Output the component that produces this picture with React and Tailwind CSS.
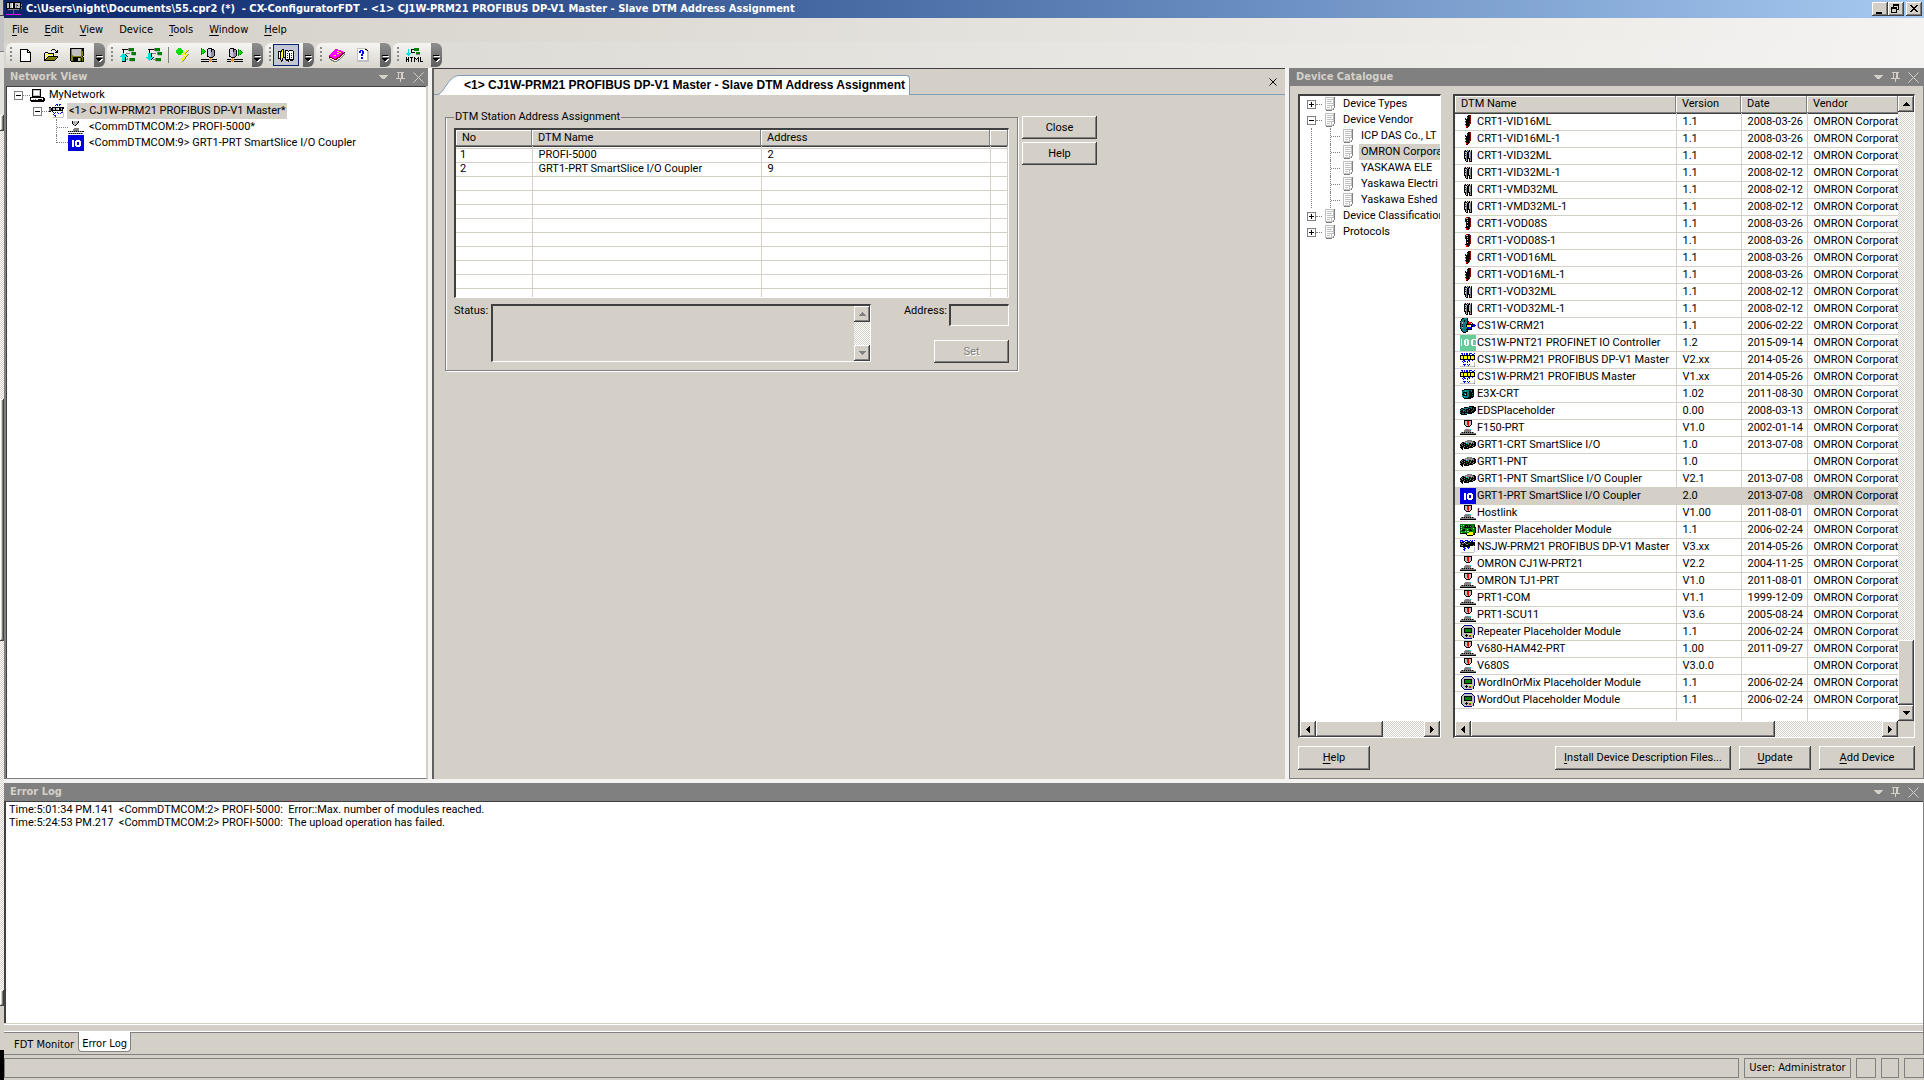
import React from "react";
import clsx from "clsx";

const COLORS = {
  k: "#000000", w: "#ffffff", g: "#808080", s: "#c0c0c0", d: "#404040",
  y: "#ffff00", o: "#808000", t: "#008080", c: "#00e0e0", b: "#0000ff",
  n: "#000080", r: "#ff0000", m: "#800000", e: "#008000", l: "#00e000",
  p: "#ff00ff", v: "#9090a8", u: "#c8c8e0", a: "#e09030",
};

const ART = {
  app: [
    "kkkkkkkkkkkkkkk.", "kssksswkksssssk.", "kssksswkksgssskg", "kssksswkksgksskg", "kssksswkksgsssk.",
    "kssksswkksgssskg", "kkkkkkkkkkkkkkkg", "..gggggpggggg...", ".......p........", ".......p........",
    ".......p........", ".......p........", "ppppppppppppppp.", "................",
  ],
  blank: [
    "kkkkkkkk...", "kwwwwwwkk..", "kwwwwwwkwk.", "kwwwwwwkkkk", "kwwwwwwwwwk", "kwwwwwwwwwk", "kwwwwwwwwwk",
    "kwwwwwwwwwk", "kwwwwwwwwwk", "kwwwwwwwwwk", "kwwwwwwwwwk", "kwwwwwwwwwk", "kkkkkkkkkkk",
  ],
  open: [
    ".........kkk....", "........k...k.k.", ".............kk.", "..kkk.......kkk.", ".kywykkkkkk.....", ".kwywywywyk.....",
    ".kywywywywk.....", ".kwywkkkkkkkkkk.", ".kywkoooooooook.", ".kwkoooooooook..", ".kkoooooooook...", ".kkkkkkkkkkk....",
  ],
  save: [
    "kkkkkkkkkkkkkk", "kosssssssssokk", "kosssssssssokk", "kosssssssssook", "kosssssssssook", "kosssssssssook",
    "kosssssssssook", "koossssssssook", "koooooooooook", "kookkkkkkkkook", "kookkkkkssokok", "kookkkkkssokok", "kookkkkkssokok", ".kkkkkkkkkkkkk",
  ],
  up: [
    "........geeeee..", "..kkkkkkgeeeee..", "...k....geeeee..", "...k.....sssss..", "...k.......geeee", "...c..gggg.geeee",
    "..ccck.....geeee", ".ccccck.....ssss", "ccccccck........", "..ccck..........", "..ccck.g.geeeee.", "..ccckgg.geeeee.",
    "..ccck...geeeee.", "..kkkk....sssss.",
  ],
  down: [
    "........geeeee..", "..kkkkkkgeeeee..", "...k....geeeee..", "...k.....sssss..", "...k.......geeee", "..ccckgggg.geeee",
    "..ccck.....geeee", "..ccck......ssss", "..ccck..........", "ccccccck........", ".ccccck..geeeee.", "..ccck.gggeeeee.",
    "...c.....geeeee.", "..........sssss.",
  ],
  bolt: [
    "..lll.........", ".lllll........", "lllllll...yyg.", "lllllll..yyg..", "lllllll.yyg...", ".lllll.yyg....", "..lll.yyyyyyg.",
    ".........yyg..", "........yyg...", ".......yyg....", "......yyyg....", "......yyg.....", ".....yyg......", ".....yg.......",
  ],
  netIn: [
    "e......kkkk.....", "ele...kuuukkk...", "elle..kuuukvvk..", "ellle.kuuukvvk..", "elle..kuuuvvvk..", "ele...kuuuvvvk..",
    "e.....kuuuvvvk..", "......kuuuvvvk..", "......kkuuvvk...", "........kkkk....", ".........a......", "kkkkkkkkaaakkkkk",
    "........aaa.....", "kkkkkkkk.a.kkkkk",
  ],
  netOut: [
    "...kkkk.........", "..kuuukkk..e....", "..kuuukvvk.ele..", "..kuuukvvk.elle.", "..kuuuvvvk.ellle", "..kuuuvvvk.elle.",
    "..kuuuvvvk.ele..", "..kuuuvvvk.e....", "..kkuuvvk.......", "....kkkk........", ".....a..........", "kkkkaaakkkkkkkkk",
    "....aaa.........", "kkkk.a.kkkkkkkkk",
  ],
  catalogue: [
    "....kk..........", "...kyk.kkk.kkkk.", "kkkkyk.kwwkwwwwk", "kwkyyk.kwwwwwwwk", "kwkyyk.kwbwkwbwk", "kwkyyk.kwwwkwwwk",
    "kwkyyk.kwbwkwbwk", "kwkyyk.kwwwkwwwk", "kwkyykkkwbwkwbwk", "kkkyk..kwwwkwwwk", "..kyk..kkkkkkkkk", "...kk...kkkwkkk.", "...k......k.....",
  ],
  book: [
    "......ppp.......", ".....ppppppp....", "....ppppyypppp..", "...pppppppyypppm", "..ppppppyypppmmg", ".pppppppppppmmwg",
    "pppppyyppppmmwg.", "mpppppppppmmwg..", "mmmpppppmmmwg...", "gwwmmppmmwwg....", ".ggwwmmmwgg.....", "..gggwwwgg......",
    "....gggg........",
  ],
  question: [
    "sssssssss...", "swwwwwwwkk..", "swwbbbwwwsk.", "swbbwbbwwwss", "swbbwbbwwwss", "swwwwbbwwwss", "swwwbbwwwwss",
    "swwwbbwwwwss", "swwwwwwwwwss", "swwwbbwwwwss", "swwwbbwwwwss", "swwwwwwwwwss", "ssssssssssss", "ssssssssssss",
  ],
  html: [
    "........eeeee.", "..c..kkkeeeee.", "..c..k..eeeee.", "..c..k........", "..c..kkkk.eeee", "ccccc.....eeee",
    ".ccc......gggg", "..c...........", "..............", "k.k.kkk.k...k.k..", "k.k..k..kk.kk.k..", "kkk..k..k.k.k.k..", "k.k..k..k...k.k..", "k.k..k..k...k.kkk",
  ],
  pc: [
    "..kkkkkkkkk....", "..ksssssssk....", "..kswwwwwsk....", "..kswwwwwsk....", "..kswwwwwsk....", "..kswwwwwsk....",
    "..ksssssssk....", "..kkkkkkkkk....", "kkkkkkkkkkkkkk.", "kwwwwwwwwwwwwkk", "kwwcwrwwkkkkwkk", "kkkkkkkkkkkkkkk", ".kkkkkkkkkkkkk.",
  ],
  master: [
    ".......bb.bb...", "......b.b.b....", "...............", "kk.kkkkkkkkkkkk", "ggkkssksswkkskk", "ggkkssksswkksk.",
    "ggkkkkkkkkkkkk.", "kk.kwwwwwwwwwg.", "...wbwbwbwwwbb.", "...wwbwwwbwbwws", "...wbwwwwwwwwws", "...wwbbwwwwwwws",
    "...wwwbwwwwwwws", "....ssssssssss.",
  ],
  connGray: [
    "....ksssssk.....", "....ksgssgk.....", "....kssssk......", ".....kssk.......", "......gk........", "................",
    "................", "......ggggg.....", ".....gggggg.....", ".....gggggg.....", "kgkgkgkgkgkgkgkk", "................", "gkgkgkgkgkgkgkg.",
  ],
  conn: [
    "....kkkkkkkk....", "....kssrrssk....", "....kssrrssk....", "....kssrrssk....", "....kssrrssk....", ".....kssrsk.....",
    "......kkkk......", "................", "................", ".....ggggcc.....", "....ggggggg.....", "....ggggggg.....",
    ".gkgkgkgkgkgkg..", "gggggggggggggggg", "kkkkkkkkkkkkkkkk",
  ],
  doc: [
    "sssssssssg", "swwwwwwwsg", "swsssssssg", "swwwwwwwsg", "swssssswsg", "swwwwwwwsg", "swsssssssg", "swwwwwwwsg",
    "swsssssssg", "swwwwwswwg", "swssswswwg", "swwwwwswg.", "ssssssssg.", ".gggggg...",
  ],
  moduleRed: [
    "...kkm", "..kkmm", "..rkkm", "b.kkkm", "bkkkkm", ".kkkkm", "bkkkkm", "gkkkkm", ".kkkmm", "bkkkm.", "skkkm.", ".rkk..", ".mk...",
  ],
  moduleYellow: [
    ".rkkm.", "rsskmm", "bkkkkm", "bkykkm", "bkkkkm", ".kykkm", ".kkkkm", ".kkkkm", ".kykkm", ".kkkkm", "bkkkm.", ".rkkm.", ".rmm..",
  ],
  moduleGray: [
    "sk.msk.m", "kbkskksk", "ksskksgk", "kbskksgk", "ksgkksgk", "kbgkksgk", "ksgkksgk", "ksgkksgk", "kkgkkkgk", ".kgk.kgk", ".ksk.ksk", "..kk.mkk",
  ],
  crm: [
    "..kktttk........", ".ktttttk........", ".kttkttk........", "ktttkttkk.......", "ttsttttkrrrk....", "ktsttttkrrrwk...",
    "ktktttkkkkkkkbb.", "ktttttkyyywbbbbb", "ktktttkyyywkkbb.", "ttsttttkbbbk....", "kttttttkbbbk....", ".kttttkkkkkk....", ".ktttttk........",
    "..ktttkk........", "...kkk..........",
  ],
  prm: [
    ".bbwbwbbwbbbwwb.", "wwbwbwbbwbwwbbw.", "kkkkkkkkkkkkkkk.", "kyykyyykyykyyyk.", "kyykyyykyykyyyk.", "kyykyyykyykyyyk.",
    "kkkkkkkkkkkkkkk.", "wwwbbwwwbbwwbww.", "wwbwbbwbwbwwwww.", "wwwbwwwbwwwwwws.", "wwwwwwwwwwwwwws.", "wwwbbbwbwbwwwws.",
    "wwwwbwwwbwwwwws.", "ssssssssssssssg.",
  ],
  nsj: [
    "bbbwwbbbwwbwbwb.", "bwbbbwwbbbwbbww.", "kkkkwkkkkkkkkkk.", "gkggkgkkeekkkkk.", "gkkkkkggkkkkkkk.", "kggkkkkkkkkkkgk.",
    "kkkkkkkkkkwwwww.", "wwwbbwwbbbwwwws.", "wwwwbbwwbwwwwws.", "wwwbbwwwwwwwwws.", "wwwwbwwwwwwwwws.", "wwwwwwwwwwwwwws.", ".sssssssssssss..",
  ],
  e3x: [
    "..kkkkkkkkkk", "kktttttkttkk", "tttctttkktkk", "tkkkkttkkkkk", "tkttkttkkktk", "kktykttkkkkk", "tkkkkttkkktk", "ttcttttkkkkk", ".kttttkkkkk.", "..kkkkkkk...",
  ],
  eds: [
    ".........kkkkk..", "....kkkkttttkkkk", ".kktttttkkktktkk", "kttkktkkktkkktkk", "tkkttkktkkkktkkk", "kkktktktkkktkkk.", "tkkkkkkkkkkkkk..", "kkttktttkkkk....", ".kkkkkk.........",
  ],
  grt: [
    ".......ggggg....", ".....ggggcgggkk.", "..kkggsggggsggkk", ".kgkkkcggkkgkgkk", "kgkkgkkkgkekkkkk", "kkgkkkekkkgkkgkk", "gkkkgkkkkekkgkk.", "kkkgkkkgkkkkk...", ".kk.kkkkk.......", "..k.............",
  ],
  board: [
    "eeeeeeeeeeeeeee.", "esesekkkekkeeek.", "keeeekgkekgkeek.", "eseekkkkkkkeeekk", "keeeeeeeeeeeesek", "esekkeesekkeeeek", "eekkkeeeekkkeeek",
    "eeeeesesseeeeeek", "eseeeeeeeyyyyeek", "kkkkkkkyyyyyyek.", "......kyyyyyykk.", ".......kkkkkk...",
  ],
  pda: [
    "...nnnnnnnn...", "..nssssssssn..", ".nssssssssssn.", "nsskkkkkkkkssn", "nsskeeeeeekssn", "nsskeeeeeekssn", "nsskeeeeeekssn",
    "nsskkkkkkkkssn", "nssssssssssssn", "nsssskssyysssn", "nssskkkseessn.", ".nssskssrrssn.", "..nsssssssssn.", "...nnnnnnnn...",
  ],
};

function Pix({ name }) {
  const rows = ART[name];
  const w = Math.max(...rows.map((r) => r.length));
  const rects = [];
  rows.forEach((row, y) => {
    let x = 0;
    while (x < row.length) {
      let n = 1;
      while (row[x + n] === row[x]) n++;
      if (row[x] !== ".") rects.push(<rect key={x + "-" + y} x={x} y={y} width={n} height="1" fill={COLORS[row[x]]} />);
      x += n;
    }
  });
  return (
    <svg width={w} height={rows.length} viewBox={`0 0 ${w} ${rows.length}`} shapeRendering="crispEdges" className="shrink-0" aria-hidden="true">
      {rects}
    </svg>
  );
}

function IoIcon() {
  return (
    <svg width="16" height="16" viewBox="0 0 16 16" shapeRendering="crispEdges" className="shrink-0" aria-hidden="true">
      <rect width="16" height="16" fill="#0000e0" />
      <path d="M4 5h2v7h-2zM8 5h4v1h1v5h-1v1h-4v-1h-1v-5h1zM9 7v3h2v-3z" fill="#fff" fillRule="evenodd" />
    </svg>
  );
}
function IocIcon() {
  return (
    <svg width="16" height="16" viewBox="0 0 16 16" shapeRendering="crispEdges" className="shrink-0" aria-hidden="true">
      <rect width="16" height="16" fill="#66cc99" />
      <path d="M1 4h1v7h-1zM4 5h1v-1h3v1h1v5h-1v1h-3v-1h-1zM6 5v5h1v-5zM11 5h1v-1h4v1h-3v5h3v1h-4v-1h-1z" fill="#fff" fillRule="evenodd" />
    </svg>
  );
}
function DeviceIcon({ name }) {
  if (name === "io") return <IoIcon />;
  if (name === "ioc") return <IocIcon />;
  return <Pix name={name} />;
}

const RAISED = "bg-[#d4d0c8] shadow-[inset_-1px_-1px_0_#404040,inset_1px_1px_0_#ffffff,inset_-2px_-2px_0_#808080]";
const SUNKEN = "border-t-2 border-l-2 border-r border-b border-t-[#404040] border-l-[#404040] border-r-white border-b-white";
const DITHER = "bg-[conic-gradient(#fff_25%,#d4d0c8_0_50%,#fff_0_75%,#d4d0c8_0)] bg-[length:2px_2px]";

function Arrow({ dir, color = "#000" }) {
  const d = { up: "M3 0h1v1h1v1h1v1h1v1H0V3h1V2h1V1h1z", down: "M0 0h7v1H6v1H5v1H4v1H3V3H2V2H1V1H0z", left: "M3 0h1v7H3V6H2V5H1V4H0V3h1V2h1V1h1z", right: "M0 0h1v1h1v1h1v1h1v1H3v1H2v1H1v1H0z" }[dir];
  const v = dir === "up" || dir === "down";
  return (
    <svg width={v ? 7 : 4} height={v ? 4 : 7} shapeRendering="crispEdges" aria-hidden="true">
      <path d={d} fill={color} />
    </svg>
  );
}
function ScrollButton({ dir, disabled }) {
  return (
    <button type="button" disabled={disabled} aria-label={"Scroll " + dir} className={clsx("flex size-4 shrink-0 items-center justify-center", RAISED)}>
      <Arrow dir={dir} color={disabled ? "#808080" : "#000"} />
    </button>
  );
}
function Button({ children, className, disabled }) {
  return (
    <button type="button" disabled={disabled} className={clsx("px-2 text-center", RAISED, disabled && "text-[#808080] [text-shadow:1px_1px_0_#fff]", className)}>
      {children}
    </button>
  );
}
const Key = ({ children }) => <span className="underline underline-offset-2">{children}</span>;

function PanelHeader({ title }) {
  return (
    <header className="flex h-[18px] shrink-0 items-center bg-[#808080] pr-1 pl-1.5 text-[#d4d0c8]">
      <h2 className="flex-1 font-['DejaVu_Sans_Condensed',sans-serif] font-bold">{title}</h2>
      <div className="flex items-center gap-2">
        <button type="button" aria-label="Panel menu">
          <svg width="9" height="10" shapeRendering="crispEdges"><path d="M0 3h9v1h-1v1h-1v1h-1v1h-3v-1h-1v-1h-1v-1h-1z" fill="#d4d0c8" /></svg>
        </button>
        <button type="button" aria-label="Pin panel">
          <svg width="9" height="10" shapeRendering="crispEdges"><path d="M1 0h7v1h-1v5h2v1h-4v3h-1v-3h-4v-1h2v-5h-1zM3 1v5h2v-5z" fill="#d4d0c8" fillRule="evenodd" /></svg>
        </button>
        <button type="button" aria-label="Close panel">
          <svg width="11" height="11"><path d="M0.5 0.5l10 10M10.5 0.5l-10 10" stroke="#d4d0c8" /></svg>
        </button>
      </div>
    </header>
  );
}

function TitleBar() {
  return (
    <header className="flex h-[18px] items-center gap-1 bg-linear-to-r from-[#0a246a] to-[#a6caf0] pr-0.5 pl-0.5 text-white">
      <Pix name="app" />
      <h1 className="flex-1 truncate font-['DejaVu_Sans_Condensed',sans-serif] text-[11px] font-bold whitespace-pre">
        {"C:\\Users\\night\\Documents\\55.cpr2 (*)  - CX-ConfiguratorFDT - <1> CJ1W-PRM21 PROFIBUS DP-V1 Master - Slave DTM Address Assignment"}
      </h1>
      <div className="flex">
        <button type="button" aria-label="Minimize" className={clsx("h-3.5 w-4", RAISED)}>
          <svg width="16" height="14" shapeRendering="crispEdges"><path d="M4 10h6v2H4z" /></svg>
        </button>
        <button type="button" aria-label="Restore" className={clsx("h-3.5 w-4", RAISED)}>
          <svg width="16" height="14" shapeRendering="crispEdges"><path d="M5 2h6v6h-2v3h-6v-6h2zM6 4v1h3v2h1v-3zM4 7v3h4v-3z" fillRule="evenodd" /></svg>
        </button>
        <button type="button" aria-label="Close" className={clsx("ml-0.5 h-3.5 w-4", RAISED)}>
          <svg width="16" height="14" shapeRendering="crispEdges"><path d="M4 3h2v1h1v1h2V4h1V3h2v1h-1v1h-1v1H9v1h1v1h1v1h1v1h-2V9H9V8H7v1H6v1H4V9h1V8h1V7h1V6H6V5H5V4H4z" /></svg>
        </button>
      </div>
    </header>
  );
}

const MENUS = [["F", "ile"], ["E", "dit"], ["V", "iew"], ["", "Device"], ["T", "ools"], ["W", "indow"], ["H", "elp"]];

function MenuBar() {
  return (
    <nav className="flex h-6 items-center bg-linear-to-r from-[#d4d0c8] to-[#f4f3f1] font-['DejaVu_Sans_Condensed',sans-serif]">
      {MENUS.map(([k, rest]) => (
        <button type="button" key={rest} className="px-2 leading-4">
          {k && <Key>{k}</Key>}
          {rest}
        </button>
      ))}
    </nav>
  );
}

function ToolGroup({ children, className = "pl-0.5" }) {
  return (
    <div className="mr-0.5 flex h-6 items-stretch overflow-hidden rounded-md bg-linear-to-b from-[#f6f5f3] to-[#d9d6cf]">
      <div className="mt-1 mb-1 ml-1 w-0.5 bg-[repeating-linear-gradient(#8c8a85_0_2px,transparent_2px_4px)]" />
      <div className={clsx("flex items-center pr-1", className)}>{children}</div>
      <button type="button" aria-label="Toolbar options" className="flex w-[11px] flex-col items-center justify-end bg-linear-to-b from-[#8f8f8f] to-[#5e5e5e] pb-1">
        <svg width="7" height="8" shapeRendering="crispEdges"><path d="M1 1h6v1H1zM1 4h6v1H6v1H5v1H3V6H2V5H1z" fill="#fff" /><path d="M0 0h6v1H0zM0 3h6v1H5v1H4v1H2V5H1V4H0z" /></svg>
      </button>
    </div>
  );
}
function Tool({ icon, label, active }) {
  return (
    <button type="button" aria-label={label} title={label} className={clsx("flex h-[22px] w-[26px] items-center justify-center", active && "border border-[#0a246a] bg-[#c2c6d6]")}>
      <Pix name={icon} />
    </button>
  );
}

function ToolBar() {
  return (
    <div className="flex h-[26px] items-center bg-linear-to-r from-[#d8d5ce] to-[#f4f3f1] pl-0.5" role="toolbar">
      <ToolGroup className="pl-0"><Tool icon="blank" label="New" /><Tool icon="open" label="Open" /><Tool icon="save" label="Save" /></ToolGroup>
      <ToolGroup>
        <Tool icon="up" label="Upload" /><Tool icon="down" label="Download" />
        <span className="mx-px h-4 w-px bg-[#808080]" />
        <Tool icon="bolt" label="Online" /><Tool icon="netIn" label="Read network" /><Tool icon="netOut" label="Write network" />
      </ToolGroup>
      <ToolGroup><Tool icon="catalogue" label="Device Catalogue" active /></ToolGroup>
      <ToolGroup><Tool icon="book" label="Contents" /><Tool icon="question" label="Help" /></ToolGroup>
      <ToolGroup><Tool icon="html" label="HTML report" /></ToolGroup>
    </div>
  );
}

function Expander({ open }) {
  return (
    <svg width="9" height="9" shapeRendering="crispEdges" className="shrink-0" aria-hidden="true">
      <rect width="9" height="9" fill="#808080" /><rect x="1" y="1" width="7" height="7" fill="#fff" />
      <path d={open ? "M2 4h5v1H2z" : "M2 4h5v1H2zM4 2h1v5H4z"} />
    </svg>
  );
}
const Dots = ({ className }) => <span className={clsx("h-0 shrink-0 border-t border-dotted border-[#808080]", className)} />;

function NetworkView() {
  return (
    <section className="flex w-[424px] shrink-0 flex-col border-x-2 border-b border-l-[#808080] border-r-[#d4d0c8] border-b-[#808080] bg-white">
      <div className="-mx-0.5"><PanelHeader title="Network View" /></div>
      <ul className="flex-1 border-t border-l border-[#404040] leading-4 whitespace-nowrap">
        <li>
          <div className="flex h-4 items-center pl-[7px]">
            <Expander open /><Dots className="w-[7px]" />
            <span className="flex w-[19px]"><Pix name="pc" /></span>MyNetwork
          </div>
          <ul>
            <li>
              <div className="flex h-4 items-center pl-[26px]">
                <Expander open /><Dots className="w-[7px]" />
                <span className="flex w-[18px]"><Pix name="master" /></span>
                <span className="bg-[#d4d0c8] px-[2px]">{"<1> CJ1W-PRM21 PROFIBUS DP-V1 Master*"}</span>
              </div>
              <ul className="ml-[49px]">
                <li className="flex h-4 items-center border-l border-dotted border-[#808080]">
                  <Dots className="w-[11px]" /><Pix name="connGray" /><span className="pl-[5px]">{"<CommDTMCOM:2> PROFI-5000*"}</span>
                </li>
                <li className="flex h-4 items-start">
                  <span className="h-2 w-3 shrink-0 border-b border-l border-dotted border-[#808080]" /><IoIcon />
                  <span className="pl-[5px]">{"<CommDTMCOM:9> GRT1-PRT SmartSlice I/O Coupler"}</span>
                </li>
              </ul>
            </li>
          </ul>
        </li>
      </ul>
    </section>
  );
}

const STATIONS = [["1", "PROFI-5000", "2"], ["2", "GRT1-PRT SmartSlice I/O Coupler", "9"]];
const HEAD = "h-4 p-0 pl-1.5 text-left font-normal bg-[#d4d0c8] shadow-[inset_-1px_-1px_0_#808080,inset_1px_1px_0_#ffffff]";
const CELL = "border-r border-b border-[#d4d0c8] p-0";

function AddressAssignment() {
  return (
    <main className="flex min-w-0 flex-1 flex-col border-t border-l-2 border-[#404040] border-l-[#606060] bg-[#d4d0c8]">
      <div className="flex h-[26px] items-end border-b border-[#7f9db9] pl-1">
        <div className="-mb-px flex h-5 items-stretch">
          <svg width="20" height="20" aria-hidden="true"><path d="M0 20C6 18 10 2 20 0.500V20z" fill="#fff" /><path d="M0 19.500C6 18 10 2 20 0.500" fill="none" stroke="#7f9db9" /></svg>
          <h2 className="rounded-tr border-t border-r border-[#7f9db9] bg-white pr-1 pl-1.5 font-['Liberation_Sans',sans-serif] text-xs leading-[18px] font-bold whitespace-nowrap">
            {"<1> CJ1W-PRM21 PROFIBUS DP-V1 Master - Slave DTM Address Assignment"}
          </h2>
        </div>
        <button type="button" aria-label="Close tab" className="mr-1 mb-1 ml-auto p-1">
          <svg width="8" height="8"><path d="M0.500 0.500l7 7M7.500 0.500l-7 7" stroke="#000" /></svg>
        </button>
      </div>
      <div className="flex items-start gap-1 pt-4 pl-[11px]">
        <fieldset className="w-[573px] border border-[#808080] px-2 pb-[7px] shadow-[1px_1px_0_#fff,inset_1px_0_0_#fff]">
          <legend className="px-px leading-3">DTM Station Address Assignment</legend>
          <div className={clsx("mt-[5px] h-[170px] overflow-hidden bg-white", SUNKEN)}>
            <table className="w-full table-fixed border-collapse leading-3">
              <colgroup><col className="w-[76px]" /><col className="w-[229px]" /><col className="w-[229px]" /><col /></colgroup>
              <thead>
                <tr className="border-b border-[#404040]"><th className={HEAD}>No</th><th className={HEAD}>DTM Name</th><th className={HEAD}>Address</th><th className={HEAD} /></tr>
              </thead>
              <tbody>
                <tr className="h-0.5">{[0, 1, 2, 3].map((c) => <td key={c} className={CELL} />)}</tr>
                {Array.from({ length: 11 }, (_, i) => (
                  <tr key={i} className="h-3.5">
                    <td className={clsx(CELL, "pl-1")}>{STATIONS[i]?.[0]}</td>
                    <td className={clsx(CELL, "pl-1.5")}>{STATIONS[i]?.[1]}</td>
                    <td className={clsx(CELL, "pl-1.5")}>{STATIONS[i]?.[2]}</td>
                    <td className={CELL} />
                  </tr>
                ))}
              </tbody>
            </table>
          </div>
          <div className="mt-1.5 flex items-start">
            <label htmlFor="status" className="w-[37px] leading-3.5">Status:</label>
            <div className={clsx("flex h-[58px] w-[380px]", SUNKEN)}>
              <textarea id="status" readOnly className="min-w-0 flex-1 resize-none bg-[#d4d0c8] outline-none" />
              <div className={clsx("flex w-4 flex-col justify-between", DITHER)}><ScrollButton dir="up" disabled /><ScrollButton dir="down" disabled /></div>
            </div>
            <div className="ml-auto flex flex-col items-end gap-3.5">
              <div className="flex items-start gap-0.5">
                <label htmlFor="address" className="leading-3.5">Address:</label>
                <input id="address" readOnly className={clsx("h-[22px] w-[60px] bg-[#d4d0c8] px-1 outline-none", SUNKEN)} />
              </div>
              <Button disabled className="h-[23px] w-[75px]">Set</Button>
            </div>
          </div>
        </fieldset>
        <div className="flex flex-col gap-[3px] pt-[5px]">
          <Button className="h-[23px] w-[75px]">Close</Button>
          <Button className="h-[23px] w-[75px]">Help</Button>
        </div>
      </div>
    </main>
  );
}

const C = "2008-03-26";
const D = "2008-02-12";
const DEVICES = [
  ["moduleRed", "CRT1-VID16ML", "1.1", C], ["moduleRed", "CRT1-VID16ML-1", "1.1", C],
  ["moduleGray", "CRT1-VID32ML", "1.1", D], ["moduleGray", "CRT1-VID32ML-1", "1.1", D],
  ["moduleGray", "CRT1-VMD32ML", "1.1", D], ["moduleGray", "CRT1-VMD32ML-1", "1.1", D],
  ["moduleYellow", "CRT1-VOD08S", "1.1", C], ["moduleYellow", "CRT1-VOD08S-1", "1.1", C],
  ["moduleRed", "CRT1-VOD16ML", "1.1", C], ["moduleRed", "CRT1-VOD16ML-1", "1.1", C],
  ["moduleGray", "CRT1-VOD32ML", "1.1", D], ["moduleGray", "CRT1-VOD32ML-1", "1.1", D],
  ["crm", "CS1W-CRM21", "1.1", "2006-02-22"], ["ioc", "CS1W-PNT21 PROFINET IO Controller", "1.2", "2015-09-14"],
  ["prm", "CS1W-PRM21 PROFIBUS DP-V1 Master", "V2.xx", "2014-05-26"], ["prm", "CS1W-PRM21 PROFIBUS Master", "V1.xx", "2014-05-26"],
  ["e3x", "E3X-CRT", "1.02", "2011-08-30"], ["eds", "EDSPlaceholder", "0.00", "2008-03-13"],
  ["conn", "F150-PRT", "V1.0", "2002-01-14"], ["grt", "GRT1-CRT SmartSlice I/O", "1.0", "2013-07-08"],
  ["grt", "GRT1-PNT", "1.0", ""], ["grt", "GRT1-PNT SmartSlice I/O Coupler", "V2.1", "2013-07-08"],
  ["io", "GRT1-PRT SmartSlice I/O Coupler", "2.0", "2013-07-08"], ["conn", "Hostlink", "V1.00", "2011-08-01"],
  ["board", "Master Placeholder Module", "1.1", "2006-02-24"], ["nsj", "NSJW-PRM21 PROFIBUS DP-V1 Master", "V3.xx", "2014-05-26"],
  ["conn", "OMRON CJ1W-PRT21", "V2.2", "2004-11-25"], ["conn", "OMRON TJ1-PRT", "V1.0", "2011-08-01"],
  ["conn", "PRT1-COM", "V1.1", "1999-12-09"], ["conn", "PRT1-SCU11", "V3.6", "2005-08-24"],
  ["pda", "Repeater Placeholder Module", "1.1", "2006-02-24"], ["conn", "V680-HAM42-PRT", "1.00", "2011-09-27"],
  ["conn", "V680S", "V3.0.0", ""], ["pda", "WordInOrMix Placeholder Module", "1.1", "2006-02-24"],
  ["pda", "WordOut Placeholder Module", "1.1", "2006-02-24"],
];
const VENDORS = ["ICP DAS Co., LT", "OMRON Corpora", "YASKAWA ELE", "Yaskawa Electri", "Yaskawa Eshed"];

function Category({ label, open, children }) {
  return (
    <li>
      <div className="flex h-4 items-center pl-[7px]">
        <Expander open={open} /><Dots className="mr-[3px] w-[6px]" /><Pix name="doc" /><span className="pl-2">{label}</span>
      </div>
      {children}
    </li>
  );
}

function DeviceCatalogue() {
  return (
    <section className="flex w-[635px] shrink-0 flex-col border-x border-b border-[#808080] bg-[#d4d0c8]">
      <PanelHeader title="Device Catalogue" />
      <div className="flex min-h-0 flex-1 gap-3 px-2 pt-2">
        <div className={clsx("flex w-[143px] flex-col bg-white", SUNKEN)}>
          <ul className="flex-1 overflow-hidden leading-4 whitespace-nowrap">
            <Category label="Device Types" />
            <Category label="Device Vendor" open>
              <ul className="ml-[11px] border-l border-dotted border-[#808080] pl-[18px]">
                {VENDORS.map((v, i) => (
                  <li key={v} className="flex h-4 items-center border-l border-dotted border-[#808080]">
                    <Dots className="mr-[3px] w-[9px]" /><Pix name="doc" />
                    <span className={clsx("ml-1.5 flex-1 pl-0.5", i === 1 && "bg-[#d4d0c8]")}>{v}</span>
                  </li>
                ))}
              </ul>
            </Category>
            <Category label="Device Classification" />
            <Category label="Protocols" />
          </ul>
          <div className={clsx("flex h-4", DITHER)}>
            <ScrollButton dir="left" /><div className={clsx("w-[67px]", RAISED)} /><div className="flex-1" /><ScrollButton dir="right" />
          </div>
        </div>
        <div className={clsx("flex min-w-0 flex-1 flex-col bg-white", SUNKEN)}>
          <div className="flex min-h-0 flex-1">
            <div className="min-w-0 flex-1 overflow-hidden">
              <table className="w-full table-fixed border-collapse leading-3 whitespace-nowrap">
                <colgroup><col className="w-[221px]" /><col className="w-[65px]" /><col className="w-[66px]" /><col /></colgroup>
                <thead>
                  <tr className="h-[17px] border-b border-[#404040]"><th className={HEAD}>DTM Name</th><th className={HEAD}>Version</th><th className={HEAD}>Date</th><th className={HEAD}>Vendor</th></tr>
                </thead>
                <tbody>
                  {DEVICES.map(([icon, name, version, date]) => (
                    <tr key={name} className={clsx("h-[17px]", icon === "io" && "bg-[#d4d0c8]")}>
                      <td className={CELL}>
                        <span className="flex h-4 items-center pl-1">
                          <span className="flex w-[18px] shrink-0 justify-center"><DeviceIcon name={icon} /></span>{name}
                        </span>
                      </td>
                      <td className={clsx(CELL, "pl-1.5")}>{version}</td>
                      <td className={clsx(CELL, "pl-1.5")}>{date}</td>
                      <td className={clsx(CELL, "border-r-0 pl-1.5")}>OMRON Corporat</td>
                    </tr>
                  ))}
                  <tr className="h-[13px]">{[0, 1, 2].map((c) => <td key={c} className="border-r border-[#d4d0c8] p-0" />)}<td /></tr>
                </tbody>
              </table>
            </div>
            <div className={clsx("flex w-4 flex-col", DITHER)}>
              <ScrollButton dir="up" /><div className="flex-1" /><div className={clsx("h-[65px]", RAISED)} /><ScrollButton dir="down" />
            </div>
          </div>
          <div className="flex h-4 bg-[#d4d0c8]">
            <div className={clsx("flex flex-1", DITHER)}>
              <ScrollButton dir="left" /><div className={clsx("w-[304px]", RAISED)} /><div className="flex-1" /><ScrollButton dir="right" />
            </div>
            <div className="w-4" />
          </div>
        </div>
      </div>
      <div className="flex h-[40px] items-center gap-2 px-2">
        <Button className="mr-auto h-6 w-[72px]"><Key>H</Key>elp</Button>
        <Button className="h-6 w-[176px]"><Key>I</Key>nstall Device Description Files...</Button>
        <Button className="h-6 w-[72px]"><Key>U</Key>pdate</Button>
        <Button className="h-6 w-24"><Key>A</Key>dd Device</Button>
      </div>
    </section>
  );
}

const LOG = [
  "Time:5:01:34 PM.141  <CommDTMCOM:2> PROFI-5000:  Error::Max. number of modules reached.",
  "Time:5:24:53 PM.217  <CommDTMCOM:2> PROFI-5000:  The upload operation has failed.",
];

function ErrorLog() {
  return (
    <section className="mt-1 flex h-[272px] shrink-0 flex-col border-r border-b border-[#808080] bg-[#d4d0c8]">
      <PanelHeader title="Error Log" />
      <div className="flex-1 border-t border-l-2 border-[#404040] bg-white py-px pl-[3px] leading-[13px] whitespace-pre">
        {LOG.map((line) => <p key={line}>{line}</p>)}
      </div>
      <div className="mt-px h-2 border-y border-white" />
      <div className="flex h-[22px] items-start border-t border-[#808080] pl-1.5 font-['DejaVu_Sans_Condensed',sans-serif] leading-4" role="tablist">
        <button type="button" role="tab" className="px-1 pt-1">FDT Monitor</button>
        <button type="button" role="tab" aria-selected="true" className="-mt-px h-5 rounded-b-sm border-x border-b border-[#808080] bg-white px-[3px] pt-1">Error Log</button>
      </div>
    </section>
  );
}

function StatusBar() {
  const box = "border border-[#808080]";
  return (
    <footer className="flex h-[25px] shrink-0 gap-[5px] bg-[#d4d0c8] pt-[3px] pb-0.5 font-['DejaVu_Sans_Condensed',sans-serif]">
      <div className={clsx("flex-1", box)} />
      <div className={clsx("w-[107px] text-center leading-[18px]", box)}>User: Administrator</div>
      <div className={clsx("w-5", box)} />
      <div className={clsx("w-[18px]", box)} />
      <div className={clsx("w-5", box)} />
    </footer>
  );
}

function BackgroundWindow() {
  return (
    <aside className="flex w-1 shrink-0 flex-col bg-[#d4d0c8]" aria-hidden="true">
      <div className="h-4 border-r border-b border-[#404040] bg-[#c0c0c0]" />
      <div className="h-9 border-b border-[#808080] bg-[#c4c4c4]" />
      <div className="h-[63px] bg-[#e4e2dd]" />
      <div className={clsx("h-4", RAISED)} />
      <div className={clsx("h-[268px]", DITHER)} />
      <div className={clsx("h-[242px]", RAISED)} />
      <div className={clsx("flex-1", DITHER)} />
      <div className={clsx("h-4", RAISED)} />
      <div className="h-11" />
      <div className="h-[30px] bg-black" />
    </aside>
  );
}

export default function App() {
  return (
    <div className="flex min-h-screen bg-[#d4d0c8] font-[Roboto,sans-serif] text-[11px] leading-4 text-black">
      <BackgroundWindow />
      <div className="flex min-w-0 flex-1 flex-col">
        <TitleBar />
        <MenuBar />
        <ToolBar />
        <div className="flex flex-1 flex-col bg-[#f4f3f1]">
          <div className="flex flex-1 gap-1">
            <NetworkView />
            <AddressAssignment />
            <DeviceCatalogue />
          </div>
          <ErrorLog />
        </div>
        <StatusBar />
      </div>
    </div>
  );
}
